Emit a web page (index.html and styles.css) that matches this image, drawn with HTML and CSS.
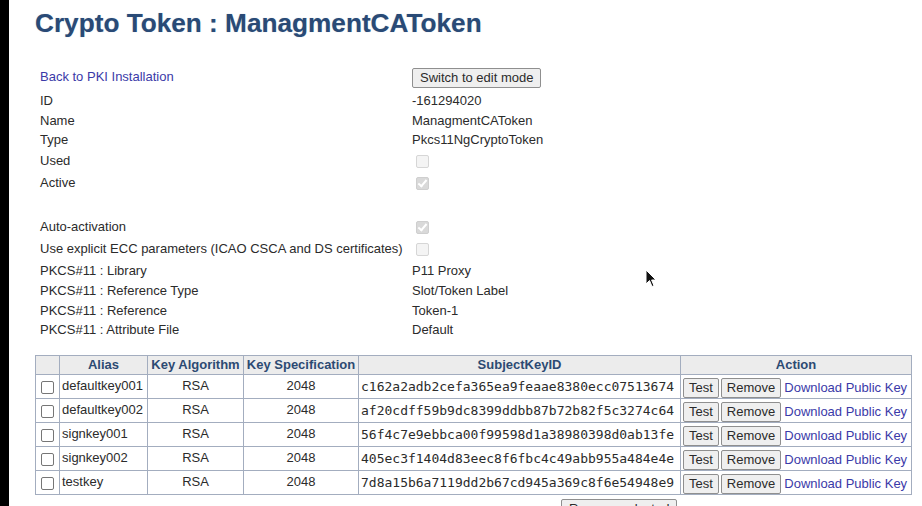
FILE: index.html
```html
<!DOCTYPE html>
<html>
<head>
<meta charset="utf-8">
<title>Crypto Token</title>
<link rel="stylesheet" href="styles.css">
</head>
<body>
<div class="frame">
  <div class="edge"></div>
  <main class="page">
    <h1 class="title">Crypto Token : ManagmentCAToken</h1>
    <div class="info">
      <div class="row r-back"><span class="label"><a href="#" class="link">Back to PKI Installation</a></span><span class="value"><button class="btn">Switch to edit mode</button></span></div>
      <div class="row r20"><span class="label">ID</span><span class="value">-161294020</span></div>
      <div class="row r19"><span class="label">Name</span><span class="value">ManagmentCAToken</span></div>
      <div class="row r20"><span class="label">Type</span><span class="value">Pkcs11NgCryptoToken</span></div>
      <div class="row r21"><span class="label">Used</span><span class="value"><span class="cb"></span></span></div>
      <div class="row r23"><span class="label">Active</span><span class="value"><span class="cb checked"></span></span></div>
      <div class="row r22"></div>
      <div class="row r21"><span class="label">Auto-activation</span><span class="value"><span class="cb checked"></span></span></div>
      <div class="row r24"><span class="label">Use explicit ECC parameters (ICAO CSCA and DS certificates)</span><span class="value"><span class="cb"></span></span></div>
      <div class="row r20"><span class="label">PKCS#11 : Library</span><span class="value">P11 Proxy</span></div>
      <div class="row r20"><span class="label">PKCS#11 : Reference Type</span><span class="value">Slot/Token Label</span></div>
      <div class="row r20"><span class="label">PKCS#11 : Reference</span><span class="value">Token-1</span></div>
      <div class="row r18"><span class="label">PKCS#11 : Attribute File</span><span class="value">Default</span></div>
    </div>

    <table class="keys">
      <colgroup>
        <col class="c-sel"><col class="c-alias"><col class="c-alg"><col class="c-spec"><col class="c-ski"><col class="c-act">
      </colgroup>
      <thead>
        <tr><th></th><th>Alias</th><th>Key Algorithm</th><th>Key Specification</th><th>SubjectKeyID</th><th>Action</th></tr>
      </thead>
      <tbody>
        <tr><td class="sel"><span class="box"></span></td><td>defaultkey001</td><td class="ctr">RSA</td><td class="ctr">2048</td><td class="mono">c162a2adb2cefa365ea9feaae8380ecc07513674</td><td class="act"><button class="btn sm">Test</button><button class="btn sm">Remove</button><a href="#" class="link">Download Public Key</a></td></tr>
        <tr><td class="sel"><span class="box"></span></td><td>defaultkey002</td><td class="ctr">RSA</td><td class="ctr">2048</td><td class="mono">af20cdff59b9dc8399ddbb87b72b82f5c3274c64</td><td class="act"><button class="btn sm">Test</button><button class="btn sm">Remove</button><a href="#" class="link">Download Public Key</a></td></tr>
        <tr><td class="sel"><span class="box"></span></td><td>signkey001</td><td class="ctr">RSA</td><td class="ctr">2048</td><td class="mono">56f4c7e9ebbca00f99598d1a38980398d0ab13fe</td><td class="act"><button class="btn sm">Test</button><button class="btn sm">Remove</button><a href="#" class="link">Download Public Key</a></td></tr>
        <tr><td class="sel"><span class="box"></span></td><td>signkey002</td><td class="ctr">RSA</td><td class="ctr">2048</td><td class="mono">405ec3f1404d83eec8f6fbc4c49abb955a484e4e</td><td class="act"><button class="btn sm">Test</button><button class="btn sm">Remove</button><a href="#" class="link">Download Public Key</a></td></tr>
        <tr><td class="sel"><span class="box"></span></td><td>testkey</td><td class="ctr">RSA</td><td class="ctr">2048</td><td class="mono">7d8a15b6a7119dd2b67cd945a369c8f6e54948e9</td><td class="act"><button class="btn sm">Test</button><button class="btn sm">Remove</button><a href="#" class="link">Download Public Key</a></td></tr>
      </tbody>
    </table>
    <div class="bulk"><button class="btn">Remove selected</button></div>
  </main>
</div>
<svg class="cursor" width="12" height="19" viewBox="0 0 12 19"><path d="M1 1 L1 15 L4.5 11.5 L7 17.5 L9 16.7 L6.6 11 L11 11 Z" fill="#111" stroke="#fff" stroke-width="1"/></svg>
</body>
</html>
```
FILE: styles.css
```css
html, body {
  margin: 0;
  padding: 0;
  background: #fff;
}
body {
  font-family: "Liberation Sans", Arial, sans-serif;
  font-size: 13px;
  color: #2b2b2b;
  position: relative;
  height: 506px;
  overflow: hidden;
}
.frame {
  display: flex;
  min-height: 506px;
}
.edge {
  width: 9px;
  flex: none;
  background: #000;
}
.page {
  flex: 1;
  padding-left: 26px;
}
.title {
  margin: 0;
  padding-top: 8px;
  font-size: 26.2px;
  line-height: 30px;
  font-weight: bold;
  color: #294a76;
  text-shadow: 0 0 1px rgba(41,74,118,0.35);
}
.info {
  margin-top: 28px;
  margin-left: 5px;
}
.row {
  display: grid;
  grid-template-columns: 372px auto;
  align-items: center;
}
.r-back { height: 25px; align-items: start; }
.r-back .label { line-height: 20px; margin-top: 1px; }
.r-back .value { padding-top: 2px; }
.r18 { height: 18px; }
.r19 { height: 19px; }
.r20 { height: 20px; }
.r21 { height: 21px; }
.r22 { height: 22px; }
.r23 { height: 23px; }
.r24 { height: 24px; }
.label, .value { line-height: 16px; white-space: nowrap; }
.link {
  color: #3b3aa8;
  text-decoration: none;
}
.btn {
  font-family: "Liberation Sans", Arial, sans-serif;
  font-size: 13px;
  color: #2b2b2b;
  background: #efefef;
  border: 1px solid #8f8f8f;
  border-radius: 2px;
  height: 20px;
  padding: 0 7px;
  line-height: 16px;
  margin: 0;
}
.cb {
  display: inline-block;
  box-sizing: border-box;
  width: 13px;
  height: 13px;
  margin-left: 4px;
  vertical-align: middle;
  border: 1px solid #d6d6d6;
  border-radius: 2px;
  background: #f4f4f4;
  position: relative;
}
.cb.checked {
  background: #d9d9d9;
  border-color: #cfcfcf;
}
.cb.checked::after {
  content: "";
  position: absolute;
  left: 3px;
  top: 0px;
  width: 3px;
  height: 7px;
  border: solid #fff;
  border-width: 0 2px 2px 0;
  transform: rotate(40deg);
}
.keys {
  margin-top: 16px;
  border-collapse: collapse;
  table-layout: fixed;
  width: 876px;
}
.c-sel { width: 24px; }
.c-alias { width: 88px; }
.c-alg { width: 96px; }
.c-spec { width: 115px; }
.c-ski { width: 322px; }
.c-act { width: 231px; }
.keys th, .keys td {
  border: 1px solid #a3adbf;
  white-space: nowrap;
  overflow: hidden;
}
.keys th {
  height: 18px;
  padding: 0 2px;
  background: #ececec;
  color: #2c4a73;
  font-weight: bold;
  text-align: center;
  line-height: 16px;
}
.keys td {
  height: 21px;
  line-height: 16px;
  padding: 0 2px 2px;
}
.keys td.ctr { text-align: center; }
.keys td.sel { text-align: center; padding: 1px 0 1px; }
.box {
  display: inline-block;
  box-sizing: border-box;
  width: 13px;
  height: 13px;
  vertical-align: middle;
  border: 1px solid #767676;
  border-radius: 2px;
  background: #fff;
}
.keys td.mono {
  font-family: "DejaVu Sans Mono", "Liberation Mono", monospace;
  font-size: 13px;
  padding: 1px 0 1px 2px;
  color: #2b2b2b;
}
.keys td.act {
  padding: 2px 0 0 2px;
}
.btn.sm {
  margin-right: 2px;
  padding: 0 5px;
}
.btn.sm + .link { margin-left: 1px; }
.bulk {
  padding-left: 526px;
  padding-top: 4px;
}
.cursor {
  position: absolute;
  left: 645px;
  top: 269px;
  filter: blur(0.5px);
}
```
